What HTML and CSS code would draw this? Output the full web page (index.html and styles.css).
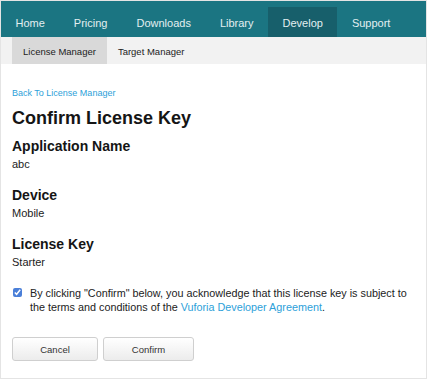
FILE: index.html
```html
<!DOCTYPE html>
<html lang="en">
<head>
    <meta charset="UTF-8">
    <title>Confirm License Key</title>
    <link rel="stylesheet" href="styles.css">
</head>
<body>
    <div class="frame">
        <nav class="main-nav">
            <a href="#">Home</a>
            <a href="#">Pricing</a>
            <a href="#">Downloads</a>
            <a href="#">Library</a>
            <a href="#" class="active">Develop</a>
            <a href="#">Support</a>
        </nav>
        <nav class="sub-nav">
            <a href="#" class="active">License Manager</a>
            <a href="#">Target Manager</a>
        </nav>

        <main class="content">
            <a href="#" class="back-link">Back To License Manager</a>
            <h1>Confirm License Key</h1>

            <section class="field">
                <h2>Application Name</h2>
                <p>abc</p>
            </section>
            <section class="field">
                <h2>Device</h2>
                <p>Mobile</p>
            </section>
            <section class="field">
                <h2>License Key</h2>
                <p>Starter</p>
            </section>

            <label class="agree">
                <input type="checkbox" checked>
                <span>By clicking "Confirm" below, you acknowledge that this license key is subject to the terms and conditions of the <a href="#">Vuforia Developer Agreement</a>.</span>
            </label>

            <div class="actions">
                <button class="btn btn-cancel">Cancel</button>
                <button class="btn btn-confirm">Confirm</button>
            </div>
        </main>
    </div>
</body>
</html>
```

FILE: styles.css
```css
* {
    margin: 0;
    padding: 0;
    box-sizing: border-box;
}

body {
    background: #ffffff;
    font-family: "Liberation Sans", Arial, sans-serif;
    color: #111;
}

.frame {
    width: 427px;
    height: 379px;
    border: 1px solid #e4e4e4;
    overflow: hidden;
}

/* Navigation principale */
.main-nav {
    display: flex;
    height: 36px;
    background: #1b7582;
}

.main-nav a {
    display: flex;
    align-items: center;
    margin-top: 6px;
    padding: 2px 14.5px 0;
    font-size: 11px;
    color: #e3eff1;
    text-decoration: none;
}

.main-nav a.active {
    background: #175f6b;
}

/* Sous-navigation */
.sub-nav {
    display: flex;
    height: 27px;
    padding-left: 11px;
    background: #f2f2f2;
}

.sub-nav a {
    display: flex;
    align-items: center;
    padding: 2px 11px 0;
    font-size: 9.5px;
    color: #222;
    text-decoration: none;
}

.sub-nav a.active {
    background: #d9d9d9;
}

/* Contenu */
.content {
    padding: 24px 11px 0;
}

.back-link {
    display: block;
    font-size: 9px;
    line-height: 11px;
    color: #2d9fd9;
    text-decoration: none;
}

h1 {
    margin-top: 8px;
    font-size: 18px;
    font-weight: 700;
    line-height: 22px;
    color: #151515;
}

.field {
    margin-top: 9px;
}

.field + .field {
    margin-top: 16px;
}

h2 {
    font-size: 14px;
    font-weight: 700;
    line-height: 17px;
    color: #151515;
}

.field p {
    margin-top: 3px;
    font-size: 11px;
    line-height: 13px;
    color: #222;
}

.agree {
    display: flex;
    gap: 8px;
    margin-top: 17px;
    padding-right: 4px;
    font-size: 10.8px;
    line-height: 14px;
    color: #222;
}

.agree input {
    flex: none;
    width: 9px;
    height: 9px;
    margin: 2px 0 0 1px;
    accent-color: #4a7fd8;
}

.agree a {
    color: #2d9fd9;
    text-decoration: none;
}

/* Boutons */
.actions {
    display: flex;
    gap: 5px;
    margin-top: 23px;
}

.btn {
    height: 24px;
    font-family: inherit;
    font-size: 9.5px;
    color: #333;
    background: linear-gradient(#ffffff, #ececec);
    border: 1px solid #cfcfcf;
    border-radius: 3px;
}

.btn-cancel {
    width: 86px;
}

.btn-confirm {
    width: 91px;
}
```
